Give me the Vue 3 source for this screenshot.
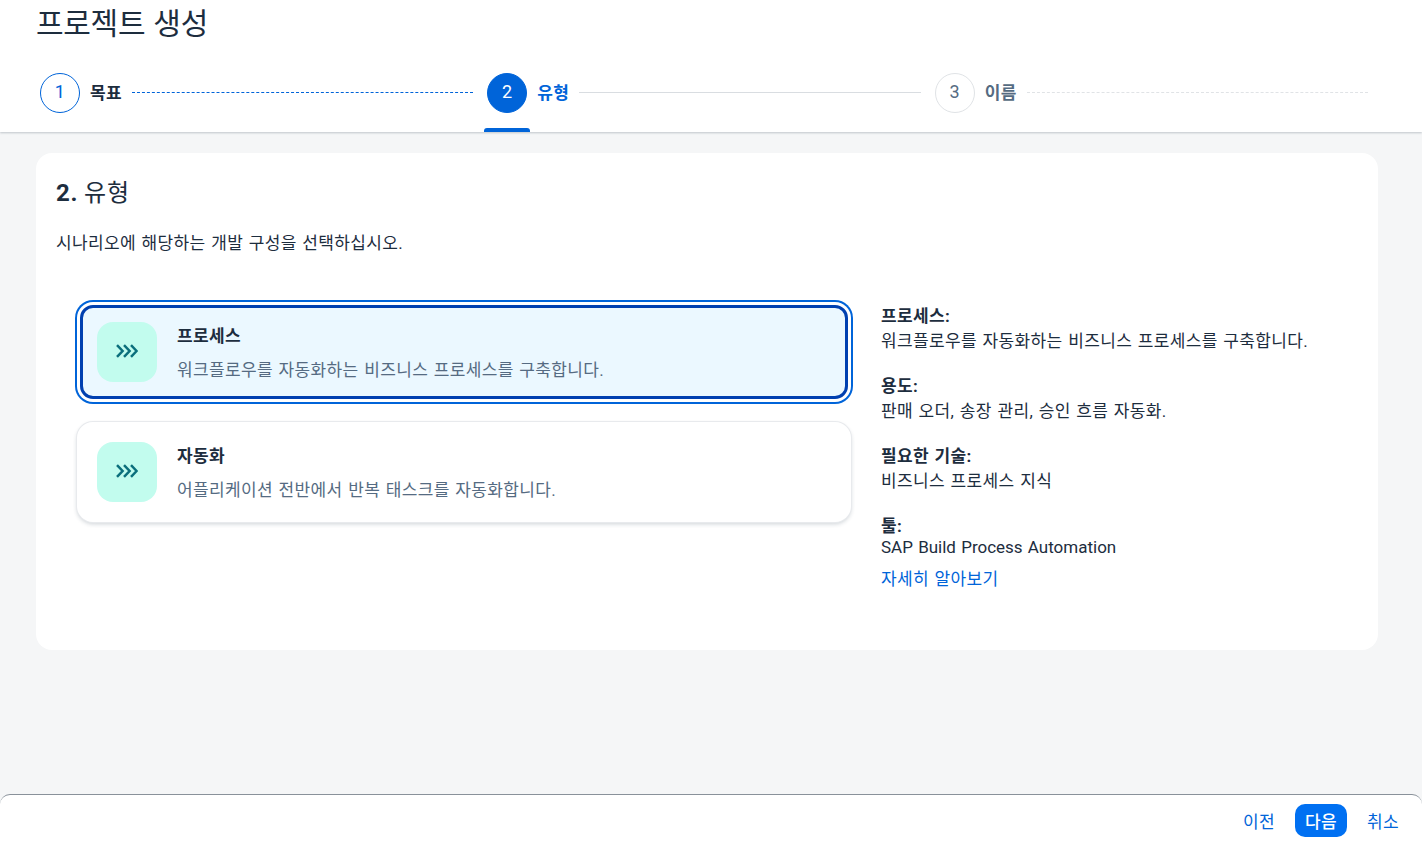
<template>
  <div class="page">
    <header class="header">
      <h1 class="title">프로젝트 생성</h1>
      <ol class="stepper">
        <li v-for="step in steps" :key="step.num" class="step" :class="step.state">
          <span class="step-num">{{ step.num }}</span>
          <span class="step-label">{{ step.label }}</span>
          <span class="step-line"></span>
          <span v-if="step.state === 'current'" class="step-marker"></span>
        </li>
      </ol>
    </header>

    <main class="main">
      <section class="panel">
        <h2 class="panel-title"><b>2.</b> 유형</h2>
        <p class="panel-desc">시나리오에 해당하는 개발 구성을 선택하십시오.</p>

        <div class="columns">
          <div class="options">
            <div
              v-for="opt in options"
              :key="opt.title"
              class="option"
              :class="{ selected: opt.selected }"
            >
              <div class="option-body">
                <span class="option-icon">
                  <svg width="22" height="14" viewBox="0 0 22 14" fill="none">
                    <path d="M1 1.2 6.6 7 1 12.8M8 1.2 13.6 7 8 12.8M15 1.2 20.6 7 15 12.8" stroke="#0b6f7c" stroke-width="2.5" />
                  </svg>
                </span>
                <div class="option-text">
                  <div class="option-title">{{ opt.title }}</div>
                  <div class="option-desc">{{ opt.desc }}</div>
                </div>
              </div>
            </div>
          </div>

          <aside class="details">
            <div v-for="item in details" :key="item.label" class="detail">
              <div class="detail-label">{{ item.label }}</div>
              <div class="detail-text">{{ item.text }}</div>
            </div>
            <a class="detail-link">자세히 알아보기</a>
          </aside>
        </div>
      </section>
    </main>

    <footer class="footer">
      <button class="btn">이전</button>
      <button class="btn primary">다음</button>
      <button class="btn">취소</button>
    </footer>
  </div>
</template>

<script setup>
const steps = [
  { num: 1, label: "목표", state: "done" },
  { num: 2, label: "유형", state: "current" },
  { num: 3, label: "이름", state: "todo" }
];

const options = [
  { title: "프로세스", desc: "워크플로우를 자동화하는 비즈니스 프로세스를 구축합니다.", selected: true },
  { title: "자동화", desc: "어플리케이션 전반에서 반복 태스크를 자동화합니다.", selected: false }
];

const details = [
  { label: "프로세스:", text: "워크플로우를 자동화하는 비즈니스 프로세스를 구축합니다." },
  { label: "용도:", text: "판매 오더, 송장 관리, 승인 흐름 자동화." },
  { label: "필요한 기술:", text: "비즈니스 프로세스 지식" },
  { label: "툴:", text: "SAP Build Process Automation" }
];
</script>

<style>
html,
body {
  margin: 0;
  overflow: hidden;
}
</style>

<style scoped>
.page {
  height: 843px;
  display: flex;
  flex-direction: column;
  background: #f5f6f7;
  font-family: Roboto, "Noto Sans CJK KR", sans-serif;
  font-size: 17px;
  letter-spacing: 0.36px;
  word-spacing: 1px;
  color: #1d2d3e;
}

.header {
  height: 132px;
  box-sizing: border-box;
  padding: 0 40px 0 36px;
  background: #fff;
  box-shadow: 0 1px 2px rgba(34, 54, 73, 0.25);
  position: relative;
}

.title {
  margin: 0;
  height: 73px;
  font-size: 30px;
  font-weight: 400;
  line-height: 48px;
  letter-spacing: -0.3px;
}

.stepper {
  list-style: none;
  margin: 0;
  padding: 0 0 0 4px;
  display: flex;
}

.step {
  flex: 1;
  display: flex;
  align-items: center;
  height: 40px;
  position: relative;
  padding-right: 14px;
}

.step-num {
  width: 40px;
  height: 40px;
  box-sizing: border-box;
  flex: none;
  border-radius: 50%;
  border: 1px solid #e0e3e6;
  display: flex;
  align-items: center;
  justify-content: center;
  color: #556b82;
  font-size: 18px;
  padding-bottom: 4px;
}

.step-label {
  margin: 0 10px 4px 10px;
  font-weight: 700;
  color: #556b82;
  white-space: nowrap;
}

.step-line {
  flex: 1;
  margin-bottom: 1px;
  border-top: 1px dashed #e0e3e6;
}

.done .step-num {
  border-color: #0064d9;
  color: #0064d9;
}

.done .step-label {
  color: #1d2d3e;
}

.done .step-line {
  border-top-color: #0064d9;
}

.current .step-num {
  background: #0064d9;
  border-color: #0064d9;
  color: #fff;
}

.current .step-label {
  color: #0064d9;
}

.current .step-line {
  border-top: 1px solid #d9dde1;
}

.step-marker {
  position: absolute;
  left: -3px;
  top: 55px;
  width: 46px;
  height: 4px;
  background: #0064d9;
  border-radius: 3px 3px 0 0;
}

.main {
  flex: 1;
  padding: 21px 44px 0 36px;
}

.panel {
  height: 497px;
  box-sizing: border-box;
  padding: 20px;
  background: #fff;
  border-radius: 16px;
}

.panel-title {
  margin: 0;
  font-size: 24px;
  font-weight: 400;
  line-height: 40px;
  letter-spacing: 0.8px;
  word-spacing: -1px;
}

.panel-title b {
  font-weight: 700;
}

.panel-desc {
  margin: 17px 0 0;
  line-height: 26px;
}

.columns {
  margin-top: 46px;
  display: flex;
  padding-left: 21px;
}

.options {
  width: 774px;
  display: flex;
  flex-direction: column;
  gap: 20px;
  flex: none;
}

.option {
  height: 100px;
  box-sizing: border-box;
  padding: 3px;
  border-radius: 16px;
  background: #fff;
  box-shadow: 0 0 0 1px #e8eaed, 0 2px 4px rgba(34, 54, 73, 0.22);
}

.option.selected {
  box-shadow: 0 0 0 2px #0064d9;
}

.option-body {
  height: 100%;
  box-sizing: border-box;
  border: 3px solid transparent;
  border-radius: 13px;
  padding-left: 14px;
  display: flex;
  align-items: center;
  gap: 20px;
}

.selected .option-body {
  border-color: #0040b0;
  background: #ebf8ff;
}

.option-icon {
  width: 60px;
  height: 60px;
  flex: none;
  border-radius: 16px;
  background: #c2fcee;
  display: flex;
  align-items: center;
  justify-content: center;
}

.option-icon svg {
  margin-bottom: 2px;
}

.option-text {
  padding-top: 2px;
}

.option-title {
  font-weight: 700;
  line-height: 24px;
}

.option-desc {
  margin-top: 10px;
  line-height: 24px;
  color: #556b82;
}

.details {
  margin-left: 30px;
  padding-top: 2px;
}

.detail {
  margin-bottom: 20px;
}

.detail:nth-last-child(2) {
  margin-bottom: 7px;
}

.detail:nth-last-child(2) .detail-text {
  margin-top: -4px;
  letter-spacing: 0;
}

.detail-label {
  font-weight: 700;
  line-height: 25px;
}

.detail-text {
  line-height: 25px;
}

.detail-link {
  display: block;
  line-height: 24px;
  color: #0064d9;
}

.footer {
  height: 49px;
  box-sizing: border-box;
  background: #fff;
  border-top: 1px solid #89919a;
  border-radius: 10px 10px 0 0;
  padding: 3px 13px 0 0;
  display: flex;
  align-items: center;
  justify-content: flex-end;
  gap: 10px;
}

.btn {
  height: 33px;
  min-width: 52px;
  padding: 0 10px;
  border: 0;
  border-radius: 10px;
  background: none;
  color: #0064d9;
  font-family: inherit;
  font-size: 17px;
  letter-spacing: inherit;
}

.btn.primary {
  background: #0070f2;
  color: #fff;
  font-weight: 500;
}
</style>
